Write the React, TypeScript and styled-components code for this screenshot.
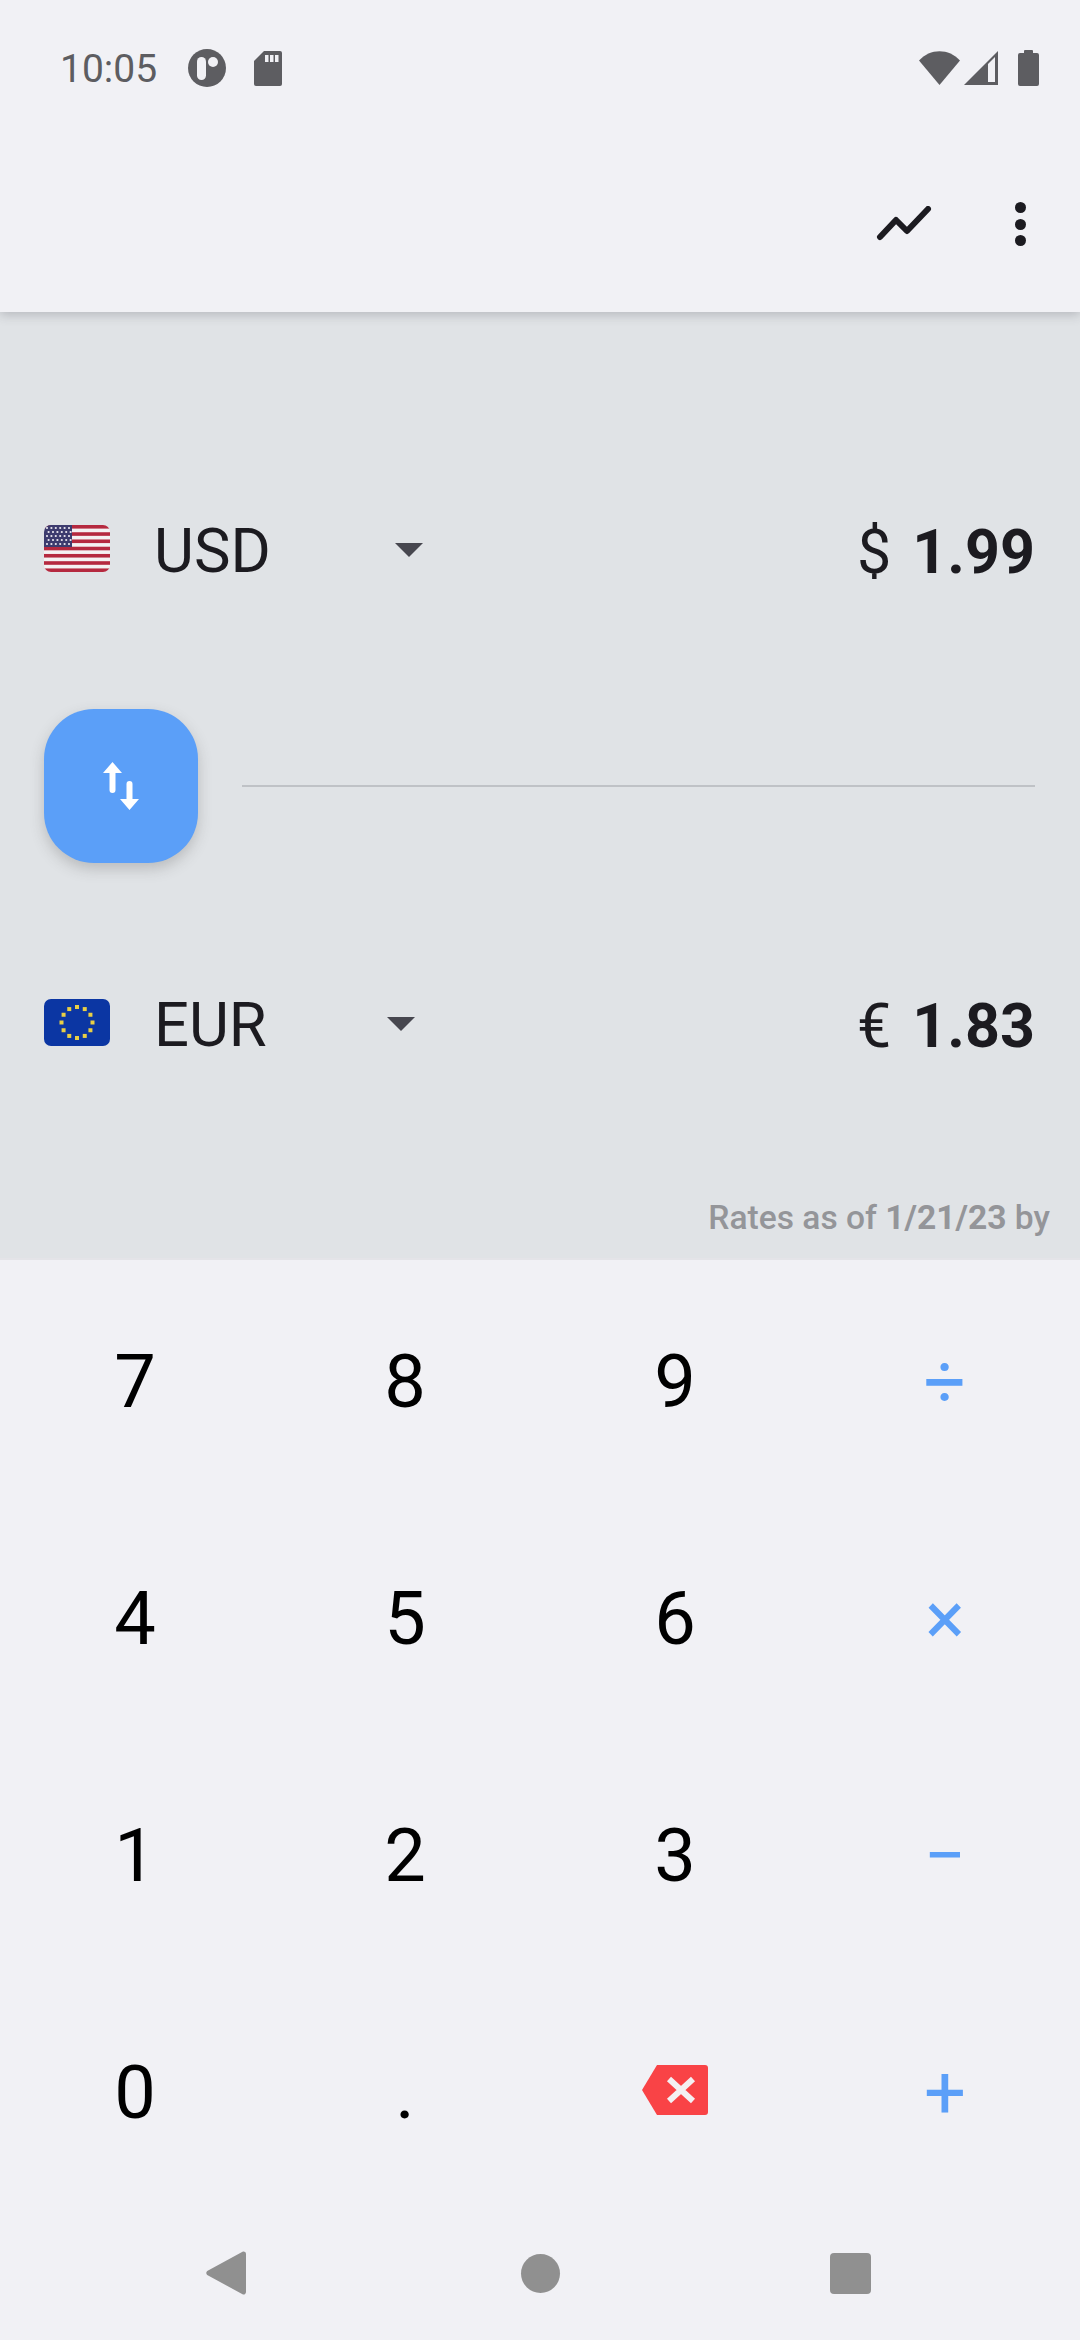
import styled, { createGlobalStyle } from "styled-components";

const GlobalStyle = createGlobalStyle`
  html, body {
    margin: 0;
    padding: 0;
    background: #f1f1f5;
  }
  * {
    box-sizing: border-box;
  }
`;

const KEYS = ["7", "8", "9", "÷", "4", "5", "6", "×", "1", "2", "3", "−", "0", ".", "back", "+"];
const OPERATORS = ["÷", "×", "−", "+"];

const UsFlag = () => (
  <FlagSvg viewBox="0 0 66 47">
    <defs>
      <clipPath id="usClip">
        <rect width="66" height="47" rx="7" />
      </clipPath>
    </defs>
    <g clipPath="url(#usClip)">
      <rect width="66" height="47" fill="#f4f1f2" />
      {[0, 1, 2, 3, 4, 5, 6].map((i) => (
        <rect key={i} y={i * 7.24} width="66" height="3.6" fill="#b5293f" />
      ))}
      <rect width="28" height="22" fill="#3c3b6e" />
      {[0, 1, 2, 3, 4].map((row) =>
        [0, 1, 2, 3, 4, 5].map((col) => (
          <circle
            key={`${row}-${col}`}
            cx={3 + col * 4.4 + (row % 2 ? 1.6 : 0)}
            cy={3 + row * 4}
            r="1.1"
            fill="#ece9f0"
          />
        ))
      )}
    </g>
  </FlagSvg>
);

const EuFlag = () => (
  <FlagSvg viewBox="0 0 66 47">
    <rect width="66" height="47" rx="7" fill="#0b36a3" />
    {Array.from({ length: 12 }).map((_, i) => {
      const angle = (i * Math.PI) / 6;
      return (
        <rect
          key={i}
          x={33 + Math.sin(angle) * 15.5 - 2}
          y={23.5 - Math.cos(angle) * 15.5 - 2}
          width="4"
          height="4"
          fill="#e9cf45"
        />
      );
    })}
  </FlagSvg>
);

const BackspaceIcon = () => (
  <BackspaceSvg width="66" height="50" viewBox="0 0 66 50">
    <path
      d="M15 0H63a3 3 0 0 1 3 3V47a3 3 0 0 1-3 3H15L0 25Z"
      fill="#f94346"
    />
    <path
      d="M27 14L51 36M51 14L27 36"
      stroke="#f4f0f2"
      strokeWidth="6"
      fill="none"
    />
  </BackspaceSvg>
);

export default function App() {
  return (
    <Screen>
      <GlobalStyle />
      <TopBars>
        <StatusBar>
          <StatusLeft>
            <Clock>10:05</Clock>
            <svg width="38" height="38" viewBox="0 0 38 38">
              <circle cx="19" cy="19" r="19" fill="#5d5d61" />
              <rect x="9" y="8" width="9" height="23" rx="4.5" fill="#f1f1f5" />
              <circle cx="25" cy="13" r="5" fill="#f1f1f5" />
            </svg>
            <SdIcon viewBox="0 0 28 35" width="28" height="35">
              <path
                d="M10 0H26a2 2 0 0 1 2 2V33a2 2 0 0 1-2 2H2a2 2 0 0 1-2-2V10Z"
                fill="#5d5d61"
              />
              <rect x="11" y="4" width="3.5" height="7" fill="#f1f1f5" />
              <rect x="16" y="4" width="3.5" height="7" fill="#f1f1f5" />
              <rect x="21" y="4" width="3.5" height="7" fill="#f1f1f5" />
            </SdIcon>
          </StatusLeft>
          <StatusRight>
            <svg width="41" height="34" viewBox="0 0 41 34">
              <path d="M0 9.5C11 -3 30 -3 41 9.5L20.5 34Z" fill="#5d5d61" />
            </svg>
            <SignalIcon width="34" height="34" viewBox="0 0 34 34">
              <path d="M34 0V34H0Z" fill="#5d5d61" />
              <path d="M24 13L31 6V31H24Z" fill="#f1f1f5" />
            </SignalIcon>
            <BatteryIcon width="21" height="36" viewBox="0 0 21 36">
              <path
                d="M6 3V1a1 1 0 0 1 1-1H14a1 1 0 0 1 1 1V3H19a2 2 0 0 1 2 2V34a2 2 0 0 1-2 2H2a2 2 0 0 1-2-2V5a2 2 0 0 1 2-2Z"
                fill="#5d5d61"
              />
            </BatteryIcon>
          </StatusRight>
        </StatusBar>
        <Toolbar>
          <svg width="56" height="36" viewBox="0 0 56 36">
            <path
              d="M4 31L20 14L31 25L52 3"
              stroke="#1c1b20"
              strokeWidth="6"
              strokeLinecap="round"
              strokeLinejoin="round"
              fill="none"
            />
          </svg>
          <MenuDots>
            <Dot />
            <Dot />
            <Dot />
          </MenuDots>
        </Toolbar>
      </TopBars>

      <Converter>
        <CurrencyRow>
          <UsFlag />
          <CurrencyCode>USD</CurrencyCode>
          <Caret $gap={124} />
          <Amount>
            <Symbol>$</Symbol>
            1.99
          </Amount>
        </CurrencyRow>

        <SwapRow>
          <SwapButton>
            <svg width="36" height="48" viewBox="0 0 36 48">
              <path
                d="M9.5 0L19 11H12.5V28a3 3 0 0 1-6 0V11H0Z M26.5 48L36 37H29.5V22a3 3 0 0 0-6 0V37H17Z"
                fill="#ffffff"
              />
            </svg>
          </SwapButton>
          <Divider />
        </SwapRow>

        <CurrencyRow>
          <EuFlag />
          <CurrencyCode>EUR</CurrencyCode>
          <Caret $gap={120} />
          <Amount>
            <Symbol>€</Symbol>
            1.83
          </Amount>
        </CurrencyRow>

        <RatesNote>
          Rates as of <strong>1/21/23</strong> by
        </RatesNote>
      </Converter>

      <Keypad>
        {KEYS.map((key) => (
          <Key key={key} $operator={OPERATORS.includes(key)}>
            {key === "back" ? <BackspaceIcon /> : key}
          </Key>
        ))}
      </Keypad>

      <NavBar>
        <svg width="40" height="44" viewBox="0 0 40 44">
          <path
            d="M37 0.5a2.5 2.5 0 0 1 3 2.5V41a2.5 2.5 0 0 1-3 2.5L1.2 24a2.6 2.6 0 0 1 0-4Z"
            fill="#909090"
          />
        </svg>
        <HomeDot />
        <RecentSquare />
      </NavBar>
    </Screen>
  );
}

const Screen = styled.div`
  width: 1080px;
  height: 2340px;
  display: flex;
  flex-direction: column;
  overflow: hidden;
  background: #f1f1f5;
  font-family: Roboto, "Liberation Sans", sans-serif;
`;

const TopBars = styled.header`
  position: relative;
  z-index: 1;
  height: 312px;
  flex-shrink: 0;
  background: #f1f1f5;
  box-shadow: 0 3px 10px rgba(60, 60, 70, 0.25);
`;

const StatusBar = styled.div`
  height: 136px;
  display: flex;
  align-items: center;
  justify-content: space-between;
  padding: 0 41px 0 60px;
`;

const StatusLeft = styled.div`
  display: flex;
  align-items: center;
`;

const Clock = styled.span`
  width: 128px;
  margin-top: 2px;
  font-size: 39px;
  color: #5d5d61;
`;

const SdIcon = styled.svg`
  margin-left: 28px;
`;

const StatusRight = styled.div`
  display: flex;
  align-items: center;
`;

const SignalIcon = styled.svg`
  margin-left: 4px;
`;

const BatteryIcon = styled.svg`
  margin-left: 20px;
`;

const Toolbar = styled.div`
  height: 176px;
  display: flex;
  align-items: center;
  justify-content: flex-end;
  padding: 0 54px 0 0;
  gap: 83px;
`;

const MenuDots = styled.div`
  display: flex;
  flex-direction: column;
  gap: 5.5px;
`;

const Dot = styled.span`
  width: 11px;
  height: 11px;
  border-radius: 50%;
  background: #1c1b20;
`;

const Converter = styled.section`
  height: 948px;
  flex-shrink: 0;
  display: flex;
  flex-direction: column;
  background: #e0e3e6;
  padding: 190px 45px 0 44px;
  border-bottom: 2px solid #e4e4e8;
`;

const CurrencyRow = styled.div`
  height: 100px;
  display: flex;
  align-items: center;
`;

const FlagSvg = styled.svg`
  width: 66px;
  height: 47px;
  flex-shrink: 0;
  margin-bottom: 7px;
`;

const CurrencyCode = styled.span`
  margin: 0 0 3px 44px;
  font-size: 61.5px;
  color: #1c1b20;
`;

const Caret = styled.span<{ $gap: number }>`
  margin: 0 0 4px ${({ $gap }) => $gap}px;
  width: 0;
  height: 0;
  border-left: 14px solid transparent;
  border-right: 14px solid transparent;
  border-top: 14px solid #47474f;
`;

const Amount = styled.span`
  margin: 0 0 1px auto;
  font-size: 61px;
  font-weight: 700;
  color: #1c1b20;
`;

const Symbol = styled.span`
  font-weight: 400;
  margin-right: 21px;
`;

const SwapRow = styled.div`
  display: flex;
  align-items: center;
  margin: 107px 0 113px;
`;

const SwapButton = styled.button`
  width: 154px;
  height: 154px;
  flex-shrink: 0;
  display: flex;
  align-items: center;
  justify-content: center;
  padding: 0;
  border: none;
  border-radius: 50px;
  background: #5b9ff8;
  box-shadow: 0 6px 14px rgba(70, 70, 70, 0.25);
`;

const Divider = styled.div`
  flex: 1;
  height: 2px;
  margin-left: 44px;
  background: #bfc2c6;
`;

const RatesNote = styled.div`
  margin: 122px -15px 0 0;
  text-align: right;
  font-size: 33.6px;
  font-weight: 500;
  color: #949599;

  strong {
    font-weight: 700;
  }
`;

const Keypad = styled.section`
  height: 948px;
  flex-shrink: 0;
  display: grid;
  grid-template-columns: repeat(4, 270px);
  grid-auto-rows: 237px;
`;

const Key = styled.button<{ $operator: boolean }>`
  display: flex;
  align-items: center;
  justify-content: center;
  padding: ${({ $operator }) => ($operator ? "5px" : "6px")} 0 0;
  border: none;
  background: transparent;
  font-family: inherit;
  font-size: 74px;
  font-weight: 400;
  color: ${({ $operator }) => ($operator ? "#5b9ff8" : "#000000")};
`;

const BackspaceSvg = styled.svg`
  margin-bottom: 6px;
`;

const NavBar = styled.nav`
  flex: 1;
  display: flex;
  align-items: center;
  padding: 0 0 2px 206px;
`;

const HomeDot = styled.span`
  width: 39px;
  height: 39px;
  margin-left: 275px;
  border-radius: 50%;
  background: #909090;
`;

const RecentSquare = styled.span`
  width: 41px;
  height: 41px;
  margin-left: 270px;
  border-radius: 4px;
  background: #909090;
`;
